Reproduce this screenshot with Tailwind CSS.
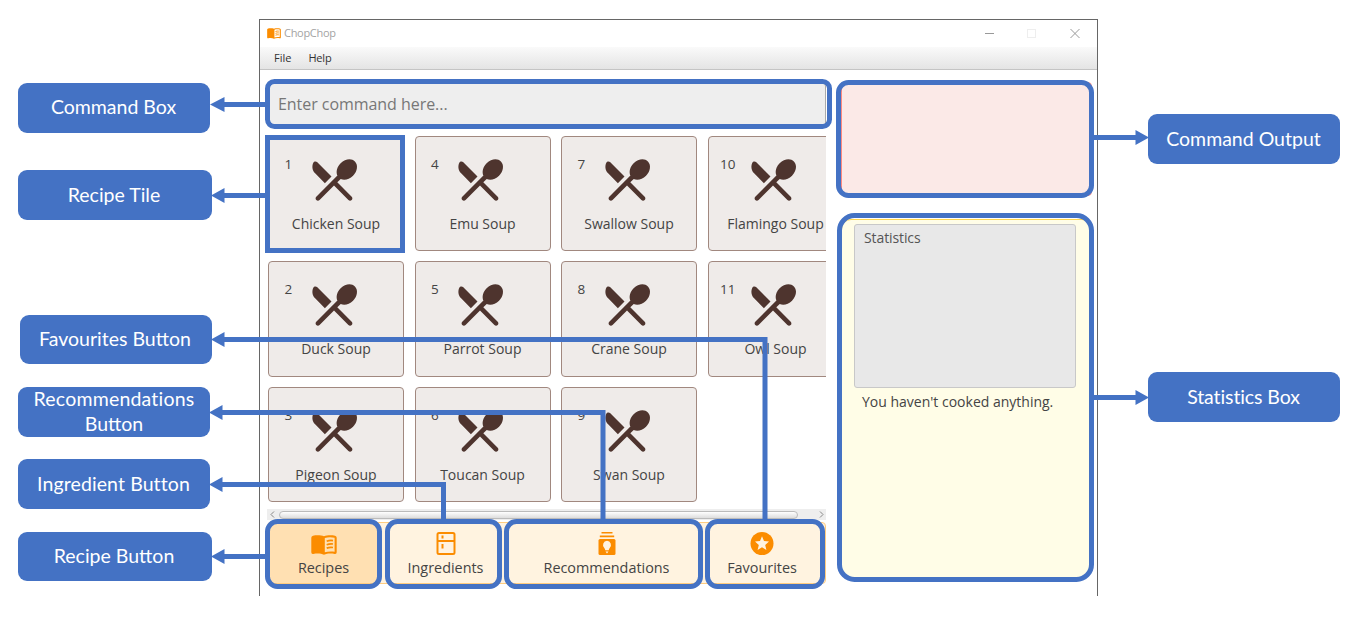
<!DOCTYPE html>
<html lang="en">
<head>
<meta charset="utf-8">
<title>ChopChop</title>
<script src="https://cdn.jsdelivr.net/npm/@tailwindcss/browser@4"></script>
</head>
<body class="relative flex h-[621px] w-[1353px] overflow-hidden bg-white font-['Open_Sans',sans-serif] text-[#444]">

<svg class="hidden">
  <symbol id="utensils" viewBox="0 0 24 24"><path fill="#4e342e" d="M8.1 13.34l2.83-2.83-6.19-6.18c-.48-.48-1.31-.35-1.61.27-.71 1.49-.45 3.32.78 4.56l4.19 4.18zm6.78-1.81c1.53.71 3.68.21 5.27-1.38 1.91-1.91 2.28-4.65.81-6.12-1.46-1.46-4.2-1.1-6.12.81-1.59 1.59-2.09 3.74-1.38 5.27L4.4 19.17c-.39.39-.39 1.02 0 1.41.39.39 1.02.39 1.41 0L12 14.41l6.18 6.18c.39.39 1.02.39 1.41 0 .39-.39.39-1.02 0-1.41L13.41 13l1.47-1.47z"/></symbol>
  <symbol id="book" viewBox="0 0 26 20"><path fill="#fb8c00" fill-rule="evenodd" d="M2 .8C5 .1 10 .1 13 1.300C16 .1 21 .1 24 .8Q25.700 1.200 25.700 2.800V17.200Q25.700 19.300 23.700 18.900C20 18.200 16 18.300 13 19.700C10 18.300 6 18.200 2.300 18.900Q.3 19.300 .3 17.200V2.800Q.3 1.200 2 .8ZM13.800 3V17.300C16.500 16.400 20 16.100 23.600 16.700V2.700C20.500 2 16.500 2 13.800 3Z"/><path d="M15.700 6.300Q18.800 5 22 5.600M15.700 9.700Q18.800 8.500 22 9M15.700 13.100Q18.800 11.900 22 12.500" fill="none" stroke="#fb8c00" stroke-width="1.700"/></symbol>
</svg>

<!-- Callouts on the left -->
<aside class="flex w-[259px] shrink-0 flex-col pl-[18px] pt-[83px] text-center font-[Lato,sans-serif] text-[19.5px] leading-[25px] text-white">
  <div class="flex h-[50px] w-[192px] items-center justify-center rounded-[9px] bg-[#4472c4] pr-px pb-[3px]">Command Box</div>
  <div class="mt-[37px] flex h-[50px] w-[194px] items-center justify-center rounded-[9px] bg-[#4472c4] pr-0.5 pb-px">Recipe Tile</div>
  <div class="ml-0.5 mt-[95px] flex h-[49px] w-[192px] items-center justify-center rounded-[9px] bg-[#4472c4] pr-0.5 pb-0.5">Favourites Button</div>
  <div class="mt-[23px] flex h-[50px] w-[192px] flex-col items-center justify-center rounded-[9px] bg-[#4472c4] pb-0.5"><span class="tracking-[0.2px]">Recommendations</span><span>Button</span></div>
  <div class="mt-[22px] flex h-[50px] w-[192px] items-center justify-center rounded-[9px] bg-[#4472c4] pr-px pb-0.5 tracking-[0.1px]">Ingredient Button</div>
  <div class="mt-[23px] flex h-[49px] w-[194px] items-center justify-center rounded-[9px] bg-[#4472c4] pr-0.5 pb-0.5">Recipe Button</div>
</aside>

<!-- Application window -->
<main class="mt-[19px] flex h-[577px] w-[839px] shrink-0 flex-col border-x border-t border-[#666]">
  <header class="flex h-[27px] shrink-0 items-center pl-[7px] pr-[17px]">
    <svg class="h-[11px] w-3.5"><use href="#book"/></svg>
    <span class="ml-[3px] text-[11px] tracking-[-0.3px] text-[#a3a3a3]">ChopChop</span>
    <svg class="ml-auto h-3 w-[96px]" fill="none"><path d="M1 5.500H10" stroke="#999"/><rect x="43.500" y="1.500" width="8" height="8" stroke="#eee"/><path d="M86.500 1L95.500 10M95.500 1L86.500 10" stroke="#999"/></svg>
  </header>
  <nav class="flex h-[23px] shrink-0 items-center gap-[17px] border-b border-[#c4c4c4] bg-gradient-to-b from-[#fafafa] to-[#e4e4e4] pl-[14px] text-[11px] text-[#333]"><span>File</span><span class="tracking-[-0.2px]">Help</span></nav>

  <div class="flex grow">
    <section class="flex w-[566px] shrink-0 flex-col pl-[7px] pt-3">
      <div class="mb-2 flex h-[45px] items-center rounded border border-[#aaa] bg-[#eee] pb-px pl-2.5 text-base tracking-[-0.05px] text-[#777]">Enter command here...</div>

      <div id="tiles" class="ml-px mt-px grid h-[373px] grid-flow-col content-start gap-x-[10.5px] gap-y-[10px] overflow-hidden [grid-auto-columns:136px] [grid-template-rows:115.3px_115.3px_115.3px]"></div>

      <div class="flex h-[11px] items-center justify-between bg-[#eee]">
        <svg class="h-[11px] w-3" fill="none" stroke="#888"><path d="M7 2.500L4 5.500L7 8.500"/></svg>
        <div class="h-[8px] w-[519px] rounded-sm border border-[#bbb] bg-gradient-to-b from-white to-[#ddd]"></div>
        <svg class="ml-auto h-[11px] w-3" fill="none" stroke="#888"><path d="M6 2.500L9 5.500L6 8.500"/></svg>
      </div>

      <div class="mt-0.5 flex h-[62px] overflow-hidden rounded border border-[#ffcc80] bg-[#fff3e0] text-[14.4px] leading-5">
        <div class="flex w-[111px] shrink-0 flex-col items-center bg-[#ffe0b2] pt-3">
          <svg class="h-5 w-[26px]"><use href="#book"/></svg>
          <span class="mt-[3px]">Recipes</span>
        </div>
        <div class="flex w-[133px] shrink-0 flex-col items-center pt-2">
          <svg class="h-[26px] w-[20px]" fill="none" stroke="#fb8c00" stroke-width="2"><rect x="1.500" y="2" width="17" height="21" rx="1.500"/><path d="M1.500 10H18.500"/><path d="M6.500 4.500V7.500M6.500 13V17.500"/></svg>
          <span class="mt-px">Ingredients</span>
        </div>
        <div class="flex w-[189px] shrink-0 flex-col items-center pt-2">
          <svg class="h-[26px] w-[18px]" fill="#fb8c00"><path d="M3.500 1H14.500V2.500H3.500ZM1.800 4.500H16.200V6.200H1.800Z"/><rect x=".5" y="8" width="17" height="16" rx="1.500"/><path fill="#fff3e0" d="M9 9.800A4.200 4.200 0 0 1 11.700 17Q11 17.800 10.700 19.200H7.300Q7 17.800 6.300 17A4.200 4.200 0 0 1 9 9.800ZM7.500 20.500H10.500L9 22.500Z"/></svg>
          <span class="mt-px">Recommendations</span>
        </div>
        <div class="flex w-[122px] shrink-0 flex-col items-center pt-2">
          <svg class="h-[26px] w-6" viewBox="0 0 24 26"><circle cx="12" cy="12.500" r="11.500" fill="#fb8c00"/><path fill="#fff3e0" d="M12 5.300L14 10.100L19 10.500L15.200 13.900L16.400 18.900L12 16.200L7.600 18.900L8.800 13.900L5 10.500L10 10.100Z"/></svg>
          <span class="mt-px">Favourites</span>
        </div>
      </div>
    </section>

    <section class="flex flex-col gap-[22px] pl-[15px] pt-3">
      <div class="h-[114px] w-[251px] rounded border border-[#ff8a80] bg-[#fbe9e7]"></div>
      <div class="mt-px h-[360px] w-[251px] rounded-[10px] border border-[#ffd54f] bg-[#fffde7] pl-[12px] pt-1 text-sm">
        <div class="h-[164px] w-[222px] rounded-[3px] border border-[#c8c8c8] bg-[#e8e8e8] pl-[9px] pt-[3px] tracking-[-0.1px] text-[#555]">Statistics</div>
        <p class="pl-2 pt-1">You haven't cooked anything.</p>
      </div>
    </section>
  </div>
</main>

<!-- Callouts on the right -->
<aside class="flex flex-col gap-[208px] pl-[50px] pt-[114px] font-[Lato,sans-serif] text-[19.5px] leading-[25px] text-white">
  <div class="flex h-[50px] w-[192px] items-center justify-center rounded-[9px] bg-[#4472c4] pr-px pb-0.5">Command Output</div>
  <div class="flex h-[50px] w-[192px] items-center justify-center rounded-[9px] bg-[#4472c4] pr-px pb-0.5 tracking-[-0.1px]">Statistics Box</div>
</aside>

<!-- Highlight frames and connectors over the window -->
<svg class="pointer-events-none absolute inset-0 h-[621px] w-[1353px]" fill="none" stroke="#4472c4" stroke-width="5">
  <rect x="267.500" y="81.500" width="562" height="45" rx="7"/>
  <rect x="267.500" y="137.500" width="135" height="113"/>
  <rect x="838.500" y="82.500" width="253" height="113" rx="10"/>
  <rect x="839.500" y="215.500" width="252" height="364" rx="15"/>
  <rect x="267.500" y="521.500" width="112" height="65" rx="10"/>
  <rect x="387.500" y="521.500" width="112" height="65" rx="10"/>
  <rect x="506.500" y="521.500" width="194" height="65" rx="10"/>
  <rect x="707.500" y="521.500" width="115" height="65" rx="10"/>
  <path d="M222 104.500H267M222 195.500H267M222 339.500H765V520M220 412.500H603V520M220 484.500H443.500V520M222 556.500H267M1092 137.500H1138M1092 397.500H1138"/>
  <g fill="#4472c4" stroke="none">
    <path d="M210 104.500L224.500 97V112ZM211 195.500L224.500 188V203ZM211 339.500L224.500 332V347ZM209 412.500L222.500 405V420ZM209 484.500L222.500 477V492ZM211 556.500L224.500 549V564ZM1149 137.500L1135.500 130V145ZM1149 397.500L1135.500 390V405Z"/>
  </g>
</svg>

<script>
  const birds = ['Chicken', 'Duck', 'Pigeon', 'Emu', 'Parrot', 'Toucan', 'Swallow', 'Crane', 'Swan', 'Flamingo', 'Owl'];
  document.getElementById('tiles').innerHTML = birds.map((bird, i) => `
    <div class="rounded-[4px] border border-[#a1887f] bg-[#efebe9] text-sm leading-5">
      <div class="flex h-[77px] pt-[15px]">
        <span class="w-[36.5px] pl-[2px] pt-0.5 text-center text-[13.5px] whitespace-nowrap">${i + 1}</span>
        <svg class="h-14 w-14 shrink-0"><use href="#utensils"/></svg>
      </div>
      <div class="text-center whitespace-nowrap">${bird} Soup</div>
    </div>`).join('');
</script>
</body>
</html>
